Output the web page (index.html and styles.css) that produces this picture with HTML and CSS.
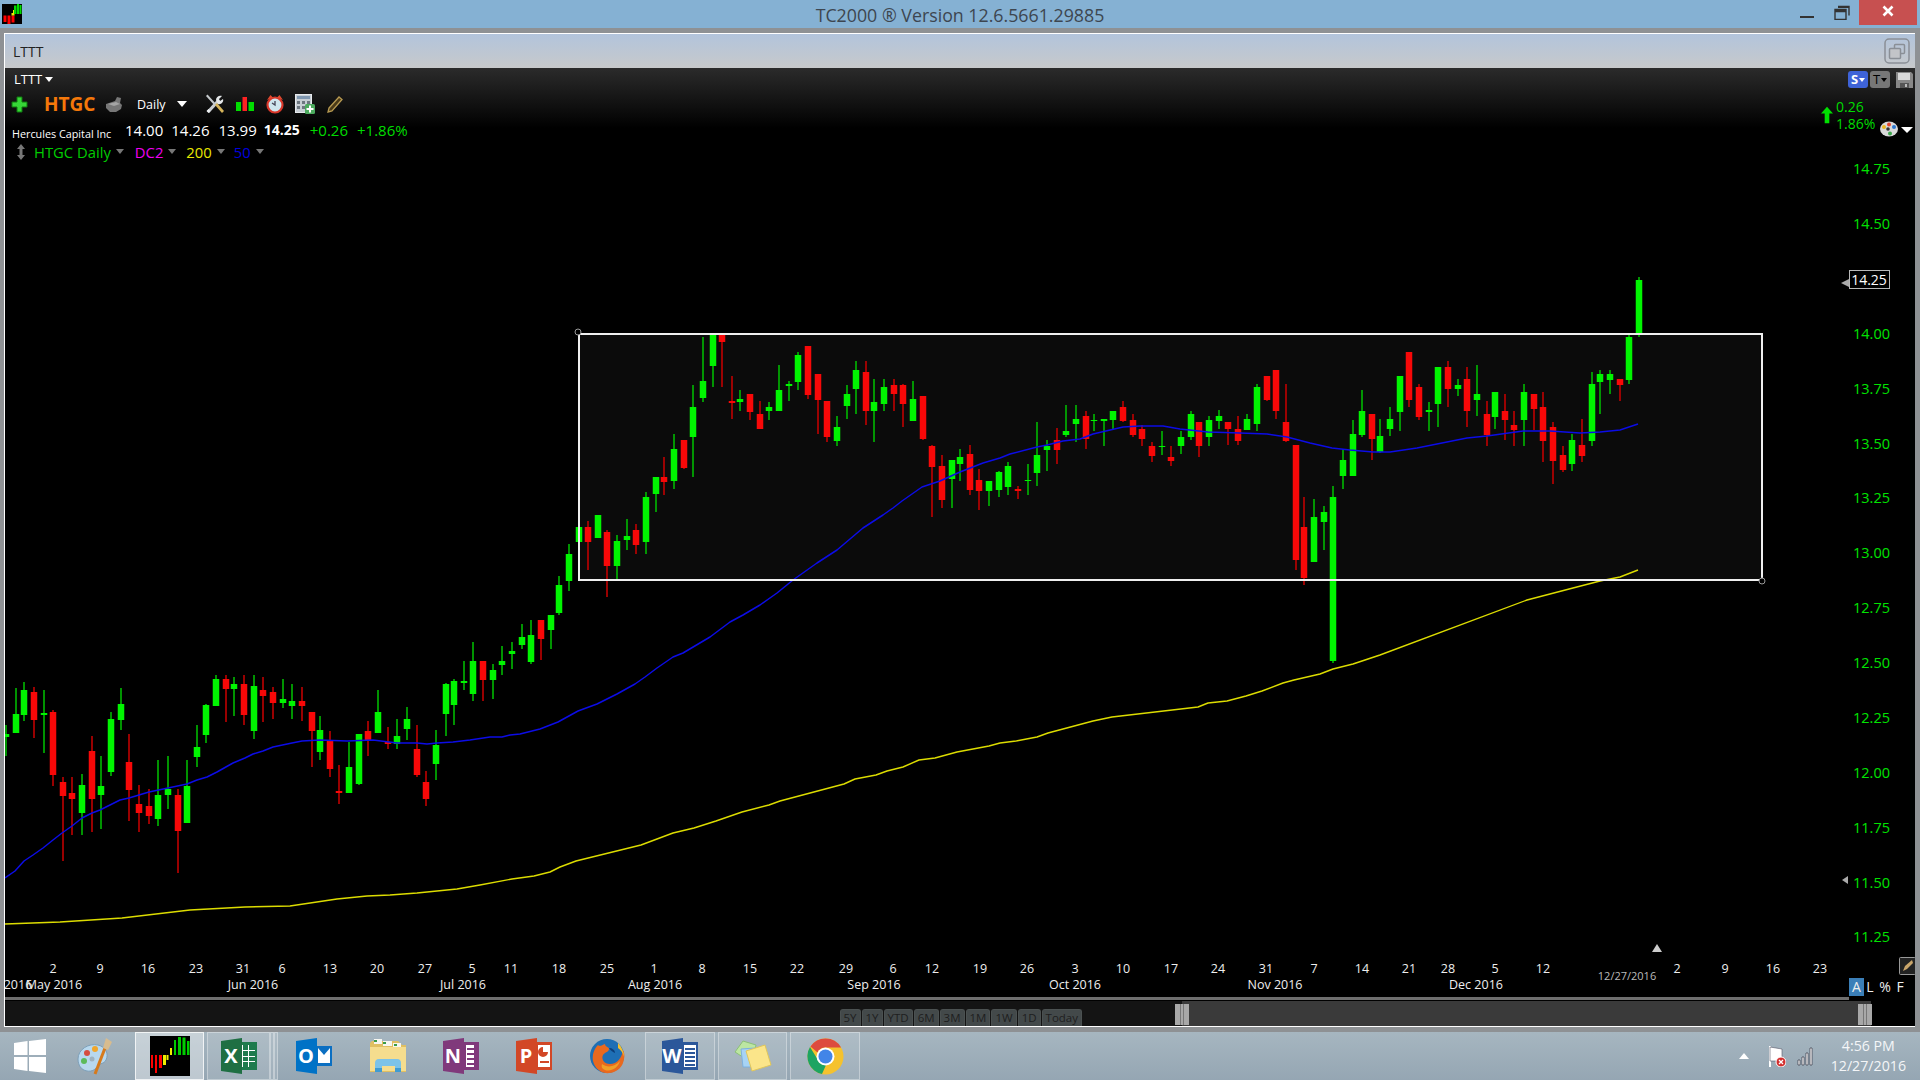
FILE: index.html
```html
<!DOCTYPE html>
<html lang="en">
<head>
<meta charset="utf-8">
<title>TC2000 Version 12.6.5661.29885</title>
<link rel="stylesheet" href="styles.css">
</head>
<body>
<div class="app">
  <header class="titlebar">
    <div class="title-left">
      <svg class="app-logo" width="20" height="20" viewBox="0 0 40 40"><rect width="40" height="40"/><path d="M3 23h6v13H3zM11 23h6v18h-6zM19 23h6v14h-6z" fill="#f00"/><path d="M19 18h6v5h-6zM22 12h4v6h-4z" fill="#ee0"/><path d="M24 3h5v17h-5z" fill="#0d0"/><path d="M30 0h4v20h-4zM35 2h4v18h-4z" fill="#0d0"/></svg>
    </div>
    <div class="title-text">TC2000 ® Version 12.6.5661.29885</div>
    <div class="title-controls">
      <span class="win-min"></span>
      <svg class="win-max" width="16" height="15" viewBox="0 0 16 15"><path d="M4 1.5h11v9M1 4.5h11v10H1zM1 6.5h11" fill="none" stroke="#333" stroke-width="1.4"/><path d="M4 1h11v2H4zM1 4h11v2H1z" fill="#333"/></svg>
      <span class="win-close">
        <svg width="12" height="12" viewBox="0 0 12 12"><path d="M1.5 1.5l9 9M10.500 1.500l-9 9" stroke="#fff" stroke-width="2.600"/></svg>
      </span>
    </div>
  </header>

  <div class="window">
    <div class="panel-head">
      <span class="panel-name">LTTT</span>
      <svg width="26" height="26" viewBox="0 0 26 26"><rect x="1" y="1" width="24" height="24" rx="4" fill="none" stroke="#8a8f96" stroke-width="1.500"/><rect x="10.500" y="6.500" width="10" height="9" rx="1" fill="none" stroke="#8a8f96" stroke-width="1.500"/><rect x="5.500" y="10.500" width="11" height="10" rx="1" fill="#c2c4c8" stroke="#8a8f96" stroke-width="1.500"/></svg>
    </div>

    <main class="chart">
      <svg class="plot" width="1910" height="959" viewBox="5 68 1910 959">
        <rect class="draw-fill" x="579" y="334" width="1183" height="246"/>

        <path class="wick-g" d="M6 725V756M16 688V733M24 682V721M44 690V753M82 774V835M101 756V829M111 712V776M121 688V730M158 760V826M168 756V809M187 760V823M197 725V767M206 704V743M216 675V706M234 677V716M254 675V739M283 679V708M292 684V719M320 716V760M349 742V793M359 734V785M378 690V733M397 719V749M407 707V740M436 730V780M446 683V736M454 679V725M464 661V690M473 642V701M493 664V699M502 646V675M512 642V669M522 624V649M531 620V664M551 615V649M559 576V615M569 544V591M579 523V570M598 515V538M617 535V580M627 519V550M646 492V554M656 477V512M674 434V489M693 385V477M703 337V402M713 335V387M740 390V411M769 402V420M779 365V411M789 381V401M798 352V390M837 416V446M847 385V419M856 361V414M874 379V442M884 379V411M913 381V421M952 460V508M960 449V481M989 481V506M999 471V497M1008 462V495M1028 464V495M1037 422V486M1047 440V471M1066 405V437M1076 405V442M1094 414V431M1104 419V446M1113 411V429M1162 431V455M1181 431V454M1191 411V440M1209 416V446M1219 410V429M1247 414V430M1257 384V431M1314 499V562M1324 506V550M1333 486V663M1343 449V489M1353 420V476M1362 390V437M1380 419V453M1390 407V436M1400 376V431M1429 402V431M1438 367V427M1458 379V396M1477 365V416M1495 392V429M1524 384V446M1572 434V471M1592 372V446M1600 370V414M1610 370V394M1629 335V384M1639 277V337"/>
        <path class="body-g" d="M6 734V737M16 714V733M24 690V715M44 713V715M82 785V813M101 786V795M111 719V772M121 704V720M158 795V819M168 789V795M187 786V823M197 747V757M206 705V735M216 679V706M234 684V689M254 686V731M283 699V703M292 701V706M320 730V752M349 767V793M359 734V784M378 712V733M397 736V744M407 719V729M436 745V764M446 684V714M454 681V705M464 681V683M473 661V694M493 670V680M502 661V665M512 651V654M522 637V645M531 635V662M551 615V630M559 585V613M569 554V581M579 527V542M598 515V538M617 541V566M627 536V540M646 497V542M656 477V494M674 449V481M693 407V437M703 381V398M713 335V366M740 399V402M769 407V411M779 390V411M789 384V386M798 355V382M837 427V441M847 394V406M856 370V389M874 402V411M884 387V404M913 399V421M952 460V479M960 457V464M989 481V491M999 472V490M1008 466V487M1028 480V481M1037 455V473M1047 446V450M1066 431V435M1076 419V424M1094 420V421M1104 419V421M1113 411V420M1162 446V447M1181 437V446M1191 414V437M1209 420V437M1219 416V421M1247 419V430M1257 387V424M1314 517V562M1324 512V522M1333 497V661M1343 460V476M1353 434V476M1362 411V435M1380 436V452M1390 419V429M1400 376V412M1429 410V412M1438 367V404M1458 385V389M1477 394V400M1495 392V417M1524 392V420M1572 440V464M1592 384V441M1600 374V382M1610 374V380M1629 337V380M1639 280V335"/>
        <path class="wick-r" d="M34 687V738M53 710V786M63 777V861M72 777V835M92 736V832M129 734V821M139 785V832M149 789V824M178 789V873M226 675V722M244 675V725M263 677V722M273 687V719M302 687V721M312 712V767M330 731V777M339 765V804M368 721V756M388 727V749M417 725V777M426 771V806M483 661V701M541 620V660M588 521V570M607 530V597M636 524V554M664 457V495M684 440V469M722 335V387M732 376V419M750 394V420M760 401V429M808 346V399M818 374V434M827 401V442M866 361V425M894 379V411M903 384V427M923 396V440M932 445V517M942 455V508M970 445V495M979 469V510M1018 486V499M1057 428V464M1086 411V449M1123 401V422M1133 414V437M1142 425V446M1152 442V462M1171 446V466M1199 422V457M1228 422V445M1238 416V445M1267 376V401M1276 370V419M1286 384V442M1296 445V570M1304 497V585M1372 414V460M1409 352V407M1419 384V420M1448 361V407M1467 367V427M1487 401V446M1505 394V440M1514 411V446M1534 394V430M1543 392V462M1553 422V484M1563 446V472M1582 419V462M1620 379V401"/>
        <path class="body-r" d="M34 692V720M53 712V775M63 782V796M72 793V799M92 751V799M129 762V790M139 804V813M149 806V816M178 795V831M226 679V689M244 684V715M263 690V696M273 692V703M302 701V706M312 712V731M330 740V769M339 791V793M368 731V740M388 742V744M417 749V775M426 782V799M483 661V680M541 620V639M588 527V542M607 532V566M636 530V545M664 477V482M684 440V468M722 335V342M732 401V403M750 394V412M760 414V429M808 346V395M818 374V400M827 401V437M866 372V411M894 385V394M903 385V404M923 396V439M932 446V467M942 466V500M970 454V490M979 480V491M1018 489V491M1057 440V450M1086 416V439M1123 407V421M1133 420V435M1142 429V439M1152 446V456M1171 457V461M1199 422V446M1228 422V429M1238 429V441M1267 376V400M1276 370V411M1286 422V441M1296 445V560M1304 527V578M1372 414V439M1409 352V400M1419 387V417M1448 367V389M1467 379V411M1487 414V435M1505 411V420M1514 425V430M1534 394V409M1543 407V441M1553 427V461M1563 455V470M1582 445V456M1620 379V385"/>

        <polyline class="ma-blue" points="5,878 15,871 24,861 33,855 43,848 53,840 62,833 72,826 82,818 92,813 100,810 110,805 120,800 129,798 139,795 149,792 168,788 187,784 197,780 207,777 217,772 233,763 245,758 253,754 263,751 273,747 292,743 302,741 320,740 347,741 373,740 397,743 417,743 427,744 437,743 453,742 470,740 490,737 502,737 510,735 520,734 540,729 558,722 578,711 597,704 617,694 635,684 645,677 657,668 673,657 683,653 710,637 730,622 743,615 760,605 777,593 793,580 817,563 837,550 863,528 883,515 893,508 902,501 922,487 940,481 960,472 983,463 1000,458 1010,454 1037,447 1047,445 1063,441 1080,439 1093,434 1123,427 1140,426 1163,426 1180,429 1208,432 1240,433 1267,434 1287,437 1310,443 1332,448 1350,450 1373,452 1390,452 1417,448 1447,442 1467,438 1487,436 1523,431 1550,431 1580,433 1600,432 1620,430 1638,424"/>
        <polyline class="ma-yellow" points="5,924 60,922 122,918 190,910 245,907 290,906 337,899 367,896 390,895 417,893 457,889 480,885 512,879 534,876 550,872 560,867 576,861 641,845 673,833 694,828 716,821 742,812 769,805 780,801 844,784 855,779 876,775 887,771 903,767 919,760 935,758 957,752 989,746 1000,743 1016,741 1037,737 1048,733 1093,721 1112,717 1198,707 1208,703 1227,701 1246,696 1262,691 1283,683 1294,680 1320,674 1333,669 1353,664 1380,655 1527,600 1573,588 1600,581 1620,577 1638,570"/>

        <rect class="draw-box" x="579" y="334" width="1183" height="246"/>
        <circle class="draw-handle" cx="578" cy="332" r="3"/>
        <circle class="draw-handle" cx="1762" cy="581" r="3"/>

        <g class="price-axis">
          <text x="1853" y="174">14.75</text><text x="1853" y="229">14.50</text><text x="1853" y="339">14.00</text><text x="1853" y="394">13.75</text><text x="1853" y="449">13.50</text><text x="1853" y="503">13.25</text><text x="1853" y="558">13.00</text><text x="1853" y="613">12.75</text><text x="1853" y="668">12.50</text><text x="1853" y="723">12.25</text><text x="1853" y="778">12.00</text><text x="1853" y="833">11.75</text><text x="1853" y="888">11.50</text><text x="1853" y="942">11.25</text>
        </g>
        <rect class="last-box" x="1849.500" y="270.500" width="40" height="18"/>
        <text class="last-text" x="1869" y="285">14.25</text>
        <path class="marker" d="M1849 279v8l-8-4z"/>
        <path class="marker" d="M1842 880l6-4v8z"/>

        <g class="day-axis">
          <text x="53" y="973">2</text><text x="100" y="973">9</text><text x="148" y="973">16</text><text x="196" y="973">23</text><text x="243" y="973">31</text><text x="282" y="973">6</text><text x="330" y="973">13</text><text x="377" y="973">20</text><text x="425" y="973">27</text><text x="472" y="973">5</text><text x="511" y="973">11</text><text x="559" y="973">18</text><text x="607" y="973">25</text><text x="654" y="973">1</text><text x="702" y="973">8</text><text x="750" y="973">15</text><text x="797" y="973">22</text><text x="846" y="973">29</text><text x="893" y="973">6</text><text x="932" y="973">12</text><text x="980" y="973">19</text><text x="1027" y="973">26</text><text x="1075" y="973">3</text><text x="1123" y="973">10</text><text x="1171" y="973">17</text><text x="1218" y="973">24</text><text x="1266" y="973">31</text><text x="1314" y="973">7</text><text x="1362" y="973">14</text><text x="1409" y="973">21</text><text x="1448" y="973">28</text><text x="1495" y="973">5</text><text x="1543" y="973">12</text><text x="1677" y="973">2</text><text x="1725" y="973">9</text><text x="1773" y="973">16</text><text x="1820" y="973">23</text>
        </g>
        <g class="month-axis">
          <text x="18" y="989">2016</text><text x="54" y="989">May 2016</text><text x="253" y="989">Jun 2016</text><text x="463" y="989">Jul 2016</text><text x="655" y="989">Aug 2016</text><text x="874" y="989">Sep 2016</text><text x="1075" y="989">Oct 2016</text><text x="1275" y="989">Nov 2016</text><text x="1476" y="989">Dec 2016</text>
        </g>
        <text class="date-tag" x="1627" y="980">12/27/2016</text>
        <path class="marker-white" d="M1657 944l5 8h-10z"/>

        <rect class="scale-on" x="1849" y="978" width="15" height="18"/>
        <g class="scale-keys">
          <text x="1856.500" y="992">A</text><text x="1870" y="992">L</text><text x="1885" y="992">%</text><text x="1900" y="992">F</text>
        </g>
        <g class="scale-pencil">
          <rect x="1899.500" y="957.500" width="16" height="17" rx="1"/>
          <path d="M1903 971l2-5 7-6 1 3-6 6z"/>
        </g>
      </svg>

      <div class="toolbar">
        <div class="row row-list"><span>LTTT</span><i class="tri tri-white"></i></div>
        <div class="row row-tools">
          <svg class="t-plus" width="17" height="17" viewBox="0 0 17 17"><path d="M6 1h5v5h5v5h-5v5H6v-5H1V6h5z" fill="#37d637" stroke="#0e7a0e" stroke-width="1"/></svg>
          <span class="symbol">HTGC</span>
          <svg class="t-blob" width="18" height="16" viewBox="0 0 18 16"><path d="M1 8l9-3 2-4 4 1-1 5 2 2-1 4-5 3H5L1 12z" fill="#777"/><path d="M3 8l8-2 4 2-6 2z" fill="#a5a5a5"/></svg>
          <span class="t-daily">Daily</span>
          <i class="tri tri-white t-dtri"></i>
          <svg class="t-wrench" width="20" height="20" viewBox="0 0 20 20"><path d="M3 18L14 6" stroke="#c9cdd0" stroke-width="3.200"/><path d="M1.500 17l2 2 2-2-2-2z" fill="#eef0f2"/><path d="M11 6c0-3 3-5 6-4l-3 3 1 2 3-2c1 3-2 6-5 5z" fill="#e4e7e9"/><path d="M1 2l1.500-1.500 9 10-1.500 1.500z" fill="#c5c9cc"/><path d="M10 11l2-2 7 8-2 2z" fill="#d6b45a"/></svg>
          <svg class="t-bars" width="18" height="14" viewBox="0 0 18 14"><path d="M0 5h5v9H0zM12.500 5H18v9h-5.500z" fill="#0d0"/><path d="M6.500 0H11v14H6.500z" fill="#f22"/></svg>
          <svg class="t-alarm" width="20" height="20" viewBox="0 0 20 20"><circle cx="10" cy="11" r="7.500" fill="#cfe6ee" stroke="#d8372a" stroke-width="2.200"/><path d="M2 6l3.500-5 2.500 2.500zM18 6l-3.500-5-2.500 2.500z" fill="#e0492f"/><path d="M10 7v4l-3-2" fill="none" stroke="#445" stroke-width="1.300"/></svg>
          <svg class="t-calc" width="20" height="20" viewBox="0 0 20 20"><rect x="0.500" y="0.500" width="16" height="18" fill="#c7ced4" stroke="#e6eaee"/><path d="M2 2h13v3H2z" fill="#7f97b0"/><path d="M2 7h3v3H2zM7 7h3v3H7zM12 7h3v3h-3zM2 12h3v3H2zM7 12h3v3H7z" fill="#6d7780"/><rect x="10" y="10" width="10" height="10" rx="1.500" fill="#4caa5e"/><path d="M15 11.500v7M11.500 15h7" stroke="#fff" stroke-width="2"/></svg>
          <svg class="t-pencil" width="18" height="18" viewBox="0 0 18 18"><path d="M3 13L13 2l3 2.500L6 16l-4 1z" fill="#4a3a18" stroke="#b79a52" stroke-width="1.300"/></svg>
        </div>
        <div class="row row-quote">
          <span class="co-name">Hercules Capital Inc</span>
          <span class="q-open">14.00</span><span class="q-high">14.26</span><span class="q-low">13.99</span><b class="q-last">14.25</b>
          <span class="q-chg">+0.26</span><span class="q-pct">+1.86%</span>
        </div>
        <div class="row row-legend">
          <svg class="l-move" width="10" height="16" viewBox="0 0 10 16"><path d="M5 0l4 5H6.500v6H9l-4 5-4-5h2.500V5H1z" fill="#777"/></svg>
          <span class="l-green">HTGC Daily</span><i class="tri tri-gray"></i>
          <span class="l-mag">DC2</span><i class="tri tri-gray"></i>
          <span class="l-yel">200</span><i class="tri tri-gray"></i>
          <span class="l-blue">50</span><i class="tri tri-gray"></i>
        </div>
      </div>

      <div class="chart-tools">
        <span class="tool-btn tool-s">S<i class="tri tri-small-w"></i></span>
        <span class="tool-btn tool-t">T<i class="tri tri-small-k"></i></span>
        <svg class="tool-save" width="17" height="17" viewBox="0 0 17 17"><path d="M0 1h15l2 2v14H0z" fill="#888"/><path d="M2 2h12v7H2z" fill="#d8d8d8"/><path d="M4 12h9v5H4z" fill="#555"/><path d="M9 13h2v3H9z" fill="#bbb"/></svg>
      </div>

      <div class="chart-change">
        <svg class="chg-arrow" width="12" height="18" viewBox="0 0 13 18"><path d="M6.500 0L13 7.500H9V18H4V7.500H0z" fill="#00e000"/></svg>
        <div class="chg-text"><span>0.26</span><span>1.86%</span></div>
        <svg class="chg-palette" width="18" height="16" viewBox="0 0 18 16"><ellipse cx="9" cy="8" rx="9" ry="7.500" fill="#d9d9d9"/><circle cx="4" cy="6" r="2" fill="#e8b620"/><circle cx="9" cy="3.500" r="2" fill="#e2452f"/><circle cx="14" cy="6" r="2" fill="#2f78d0"/><circle cx="10" cy="12.500" r="2" fill="#3aa64a"/><circle cx="8" cy="8" r="1.800" fill="#333"/></svg>
        <i class="tri tri-big"></i>
      </div>

      <div class="range">
        <div class="range-line"></div>
        <div class="range-strip">
          <div class="range-left">
            <span class="rbtn">5Y</span><span class="rbtn">1Y</span><span class="rbtn">YTD</span><span class="rbtn">6M</span><span class="rbtn">3M</span><span class="rbtn">1M</span><span class="rbtn">1W</span><span class="rbtn">1D</span><span class="rbtn">Today</span>
          </div>
          <div class="range-sel">
            <span class="grip grip-a"></span>
            <span class="grip grip-b"></span>
          </div>
        </div>
      </div>
    </main>
  </div>

  <footer class="taskbar">
    <div class="ti ti-start">
      <svg width="32" height="34" viewBox="0 0 32 34"><path d="M0 4l13.500-2v14H0zM15 2l17-2v16H15zM0 18h13.500v14L0 30zM15 18h17v16l-17-2z" fill="#fff"/></svg>
    </div>
    <div class="ti ti-paint">
      <svg width="36" height="38" viewBox="0 0 36 38"><path d="M1 22C1 12 12 6 21 8c8 2 11 9 8 15-2 4-6 3-8 6s-6 6-11 5C4 33 1 28 1 22z" fill="#b8d8ee" stroke="#7d9fb8"/><circle cx="10" cy="16" r="3" fill="#d64d3f"/><circle cx="18" cy="12" r="3" fill="#f0a62c"/><circle cx="7" cy="24" r="3" fill="#5dba5a"/><circle cx="15" cy="22" r="2.500" fill="#9fb2bf"/><path d="M18 37L28 11" stroke="#d67a1c" stroke-width="3"/><path d="M26 11l3-10 6 4-4 8z" fill="#d8bc8e"/></svg>
    </div>
    <div class="ti ti-btn ti-active">
      <svg width="40" height="40" viewBox="0 0 40 40"><rect width="40" height="40"/><path d="M1 19h2v13H1zM5 19h2v18H5zM9 19h3v13H9z" fill="#f00"/><path d="M13 19h3v10h-3zM16.500 19h2v5h-2zM20 12h2v7h-2z" fill="#ee0"/><path d="M24 4h2v15h-2zM28 1h3v18h-3zM32.500 1.500h3V19h-3zM37 5h2.500v14H37z" fill="#0c0"/></svg>
    </div>
    <div class="ti ti-btn ti-excel">
      <svg width="36" height="36" viewBox="0 0 36 36"><path d="M21 4h15v28H21z" fill="#1f7b4d"/><path d="M21 7h13v22H21z" fill="#fff"/><path d="M22 7h5v5h-5zM28 7h6v5h-6zM22 13h5v5h-5zM28 13h6v5h-6zM22 19h5v4h-5zM28 19h6v4h-6zM22 24h5v5h-5zM28 24h6v5h-6z" fill="#1f7b4d"/><path d="M0 3l21-3v36L0 33z" fill="#1f6f43"/><text class="ic-letter" x="10" y="25">X</text></svg>
    </div>
    <div class="ti-stack"></div><div class="ti-stack"></div>
    <div class="ti ti-outlook">
      <svg width="36" height="36" viewBox="0 0 36 36"><path d="M20 8h16v20H20z" fill="#0b6fc2"/><path d="M22 10h12v15H22z" fill="#fff"/><path d="M22 10l6 7 6-7v-1H22z" fill="#0b6fc2"/><path d="M0 3l21-3v36L0 33z" fill="#0072c6"/><text class="ic-letter" x="10" y="25">O</text></svg>
    </div>
    <div class="ti ti-folder">
      <svg width="38" height="36" viewBox="0 0 38 36"><path d="M3 3h26l4 4h4v27H1V5z" fill="#e0bf62"/><path d="M5 1h8v5H5zM14 3h9v5h-9zM24 5h8v5h-8z" fill="#f6f6f0"/><path d="M5 2h3v2H5zM14 4h3v2h-3zM25 6h3v2h-3z" fill="#3a9c45"/><path d="M1 9h36v24H1z" fill="#f5dd8e"/><path d="M10 21h18c3 0 4 2 4 4v9H26v-6H13v6H6v-9c0-2 1-4 4-4z" fill="#7cc3e8"/><path d="M6 30h7v4H6zM26 30h6v4h-6z" fill="#3f9bd2"/></svg>
    </div>
    <div class="ti ti-onenote">
      <svg width="36" height="36" viewBox="0 0 36 36"><path d="M20 4h16v28H20z" fill="#80397b"/><path d="M23 7h8v22h-8z" fill="#fff"/><path d="M24 10h7v2h-7zM24 15h7v2h-7zM24 20h7v2h-7zM24 25h7v2h-7z" fill="#80397b"/><path d="M0 3l21-3v36L0 33z" fill="#80397b"/><text class="ic-letter" x="10" y="25">N</text></svg>
    </div>
    <div class="ti ti-ppt">
      <svg width="36" height="36" viewBox="0 0 36 36"><path d="M20 4h16v28H20z" fill="#d24726"/><path d="M22 7h12v22H22z" fill="#fff"/><path d="M27 9a5 5 0 1 0 5 5h-5z" fill="#d24726"/><path d="M24 23h9v2h-9z" fill="#d24726"/><path d="M0 3l21-3v36L0 33z" fill="#d24726"/><text class="ic-letter" x="10" y="25">P</text></svg>
    </div>
    <div class="ti ti-fox">
      <svg width="38" height="38" viewBox="0 0 38 38"><circle cx="19" cy="19" r="17" fill="#1e6fb5"/><path d="M10 8c-4 4-6 10-5 16 2 9 10 13 17 12 7-1 13-6 14-14 1-4 0-7-1-9-1 8-6 14-13 14-6 0-9-5-7-9 2-3 6-3 6-6 0-2-4-2-4-5-3 1-5 3-7 1z" fill="#e8691f"/><path d="M30 6c4 4 6 9 6 14-1-4-3-7-6-9z" fill="#f5c02e"/><path d="M14 27c5 4 13 3 18-3-2 7-9 11-15 9-3-1-4-3-3-6z" fill="#f0a028"/><path d="M21 11c3 0 6 2 6 5-2-1-4-2-6-5z" fill="#0d3f7a"/></svg>
    </div>
    <div class="ti ti-btn ti-word">
      <svg width="36" height="36" viewBox="0 0 36 36"><path d="M20 4h16v28H20z" fill="#2b579a"/><path d="M22 7h12v22H22z" fill="#fff"/><path d="M23 10h10v2H23zM23 14h10v2H23zM23 18h10v2H23zM23 22h10v2H23zM23 26h10v2H23z" fill="#2b579a"/><path d="M0 3l21-3v36L0 33z" fill="#2b579a"/><text class="ic-letter" x="10" y="25">W</text></svg>
    </div>
    <div class="ti ti-btn ti-sticky">
      <svg width="38" height="32" viewBox="0 0 38 32"><path d="M1 12L9 1l13 4-4 18z" fill="#bce6a2" stroke="#8cc078"/><path d="M7 9l14-1v19H9z" fill="#a7d3f5" stroke="#7fb0dc"/><path d="M12 11l19-6 6 20-19 6z" fill="#fbe58a" stroke="#e0c65a"/></svg>
    </div>
    <div class="ti ti-btn ti-chrome">
      <svg width="37" height="37" viewBox="0 0 37 37"><circle cx="18.500" cy="18.500" r="18" fill="#f5c22e"/><path d="M18.500 0.500a18 18 0 0 1 15.600 9H18.500a9 9 0 0 0-8 5L3.500 8.500A18 18 0 0 1 18.500 0.500z" fill="#dd4b3e"/><path d="M3 9a18 18 0 0 0 12 27l4-9c-3 0-6-1-8-5z" fill="#1da462"/><circle cx="18.500" cy="18.500" r="9" fill="#fff"/><circle cx="18.500" cy="18.500" r="7" fill="#4285e8"/></svg>
    </div>
    <div class="tray">
      <i class="tray-arrow"></i>
      <svg class="tray-flag" width="18" height="21" viewBox="0 0 18 21"><path d="M2 0v21" stroke="#fff" stroke-width="2"/><path d="M2 1l12 2v12H2z" fill="#fff" stroke="#556" stroke-width="0.600"/><circle cx="13" cy="16" r="5" fill="#d32f2f" stroke="#fff"/><path d="M11 14l4 4M15 14l-4 4" stroke="#fff" stroke-width="1.300"/></svg>
      <svg class="tray-signal" width="16" height="20" viewBox="0 0 16 20"><path d="M1 14h2v5H1zM5 11h2v8H5zM9 7h2v12H9zM13 2h2v17h-2z" fill="#fff" stroke="#334" stroke-width="0.700"/></svg>
      <div class="clock"><span>4:56 PM</span><span>12/27/2016</span></div>
    </div>
  </footer>
</div>
</body>
</html>
```
FILE: styles.css
```css
* { box-sizing: border-box; }
html, body { margin: 0; padding: 0; background: #000; }
body { font-family: "Open Sans", "Noto Sans", sans-serif; }
.app { width: 1920px; height: 1080px; display: flex; flex-direction: column; overflow: hidden; }

/* title bar */
.titlebar { height: 28px; background: #85b1d3; display: grid; grid-template-columns: 1fr auto 1fr; align-items: start; }
.title-left { padding: 4px 0 0 2px; }
.app-logo { display: block; }
.title-text { font-size: 17.800px; line-height: 30px; color: #3d4650; }
.title-controls { display: flex; justify-content: flex-end; align-items: flex-start; padding-right: 3px; }
.win-min { width: 14px; height: 2px; background: #333; margin-top: 16px; }
.win-max { margin: 5px 0 0 20px; }
.win-close { width: 58px; height: 25px; margin-left: 9px; background: #c75050; display: flex; align-items: center; justify-content: center; padding-bottom: 3px; }

/* window */
.window { height: 1004px; background: #8e9194; padding: 5px 5px 5px 4px; display: flex; flex-direction: column; }
.panel-head { height: 35px; flex: none; border-top: 1px solid #fff; border-left: 1px solid #fff; background: linear-gradient(#b2c4dc, #c7c9cb); display: flex; align-items: center; justify-content: space-between; padding: 0 5px 0 8px; }
.panel-name { font-size: 14px; color: #222; }

/* chart */
.chart { position: relative; flex: 1; border-left: 1px solid #fff; border-bottom: 1px solid #fff; background: linear-gradient(#2b2b2b, #000 60px); display: flex; flex-direction: column; color: #fff; font-size: 15px; }
.plot { position: absolute; left: 0; top: 0; display: block; font-family: "Open Sans", "Noto Sans", sans-serif; }
.draw-fill { fill: #0b0b0b; }
.wick-g, .wick-r, .body-g, .body-r { fill: none; }
.wick-g { stroke: #00c400; stroke-width: 1.500; }
.wick-r { stroke: #cc0000; stroke-width: 1.500; }
.body-g { stroke: #00f500; stroke-width: 6.500; }
.body-r { stroke: #f80808; stroke-width: 6.500; }
.ma-blue, .ma-yellow { fill: none; stroke-linejoin: round; }
.ma-blue { stroke: #0c0ce6; stroke-width: 1.500; }
.ma-yellow { stroke: #dcdc00; stroke-width: 1.400; }
.draw-box { fill: none; stroke: #efefef; stroke-width: 2; }
.draw-handle { fill: #000; stroke: #999; stroke-width: 1; }
.price-axis text { fill: #00e400; font-size: 14.500px; }
.last-box { fill: #000; stroke: #b8b8b8; }
.last-text { fill: #fff; font-size: 14px; text-anchor: middle; }
.marker { fill: #aaa; }
.marker-white { fill: #ccc; }
.day-axis text { fill: #eee; font-size: 12.500px; text-anchor: middle; }
.month-axis text { fill: #eee; font-size: 12.500px; text-anchor: middle; }
.date-tag { fill: #bbb; font-size: 11px; text-anchor: middle; }
.scale-on { fill: #3b7fb8; }
.scale-keys text { fill: #eee; font-size: 14px; text-anchor: middle; }
.scale-pencil rect { fill: #222; stroke: #999; }
.scale-pencil path { fill: #c9a56a; }
.ic-letter { fill: #fff; font-family: "Open Sans", sans-serif; font-size: 20px; font-weight: 700; text-anchor: middle; }

/* toolbar */
.toolbar { position: relative; display: flex; flex-direction: column; }
.row { display: flex; align-items: center; }
.row-list { height: 16px; margin-top: 3px; padding-left: 9px; font-size: 13px; }
.row-tools { height: 20px; margin-top: 7px; padding-left: 6px; font-size: 12.500px; }
.row-quote { height: 19px; margin-top: 7px; padding-left: 7px; align-items: flex-end; }
.row-legend { height: 17px; margin-top: 3px; padding-left: 11px; font-size: 14.800px; }
.tri { display: inline-block; flex: none; width: 0; height: 0; border-style: solid; border-color: transparent; border-bottom-width: 0; }
.tri-white { border-width: 5px 4.500px 0; border-top-color: #fff; margin-left: 3px; }
.tri-gray { border-width: 5px 4.500px 0; border-top-color: #777; margin-left: 5px; }
.tri-big { border-width: 6px 6px 0; border-top-color: #fff; margin: 0 0 -1px 3px; }
.tri-small-w { border-width: 4px 3.500px 0; border-top-color: #fff; margin-left: 1px; }
.tri-small-k { border-width: 4px 3.500px 0; border-top-color: #000; margin-left: 1px; }
.symbol { font-size: 19px; font-weight: 700; color: #f5780a; margin-left: 16px; width: 50px; line-height: 20px; }
.t-blob { margin-left: 11px; }
.t-daily { margin-left: 14px; width: 28px; }
.t-dtri { margin-left: 12px; border-width: 6px 5px 0; }
.t-wrench { margin-left: 18px; }
.t-bars { margin-left: 11px; }
.t-alarm { margin-left: 11px; }
.t-calc { margin-left: 10px; }
.t-pencil { margin-left: 11px; }
.row-quote span, .row-quote b { line-height: 20px; }
.row-quote .co-name { font-size: 10.800px; width: 100px; flex: none; white-space: nowrap; line-height: 16px; margin-bottom: -2px; }
.q-open { margin-left: 13px; }
.q-high { margin-left: 8px; }
.q-low { margin-left: 9px; }
.q-last { margin-left: 7px; font-size: 14px; }
.q-chg { margin-left: 10px; color: #00dc00; }
.q-pct { margin-left: 9px; color: #00dc00; }
.l-move { margin-right: 8px; }
.l-green { color: #00cc00; }
.l-mag { color: #f000f0; margin-left: 11px; }
.l-yel { color: #e8e800; margin-left: 10px; }
.l-blue { color: #0000e0; margin-left: 9px; }

/* top right */
.chart-tools { position: absolute; top: 3px; right: 2px; display: flex; align-items: flex-start; gap: 2px; }
.tool-btn { width: 20px; height: 17px; border-radius: 3px; display: flex; align-items: center; justify-content: center; font-size: 13px; font-weight: 700; line-height: 17px; }
.tool-s { background: #3e63d8; color: #fff; }
.tool-t { background: #777; color: #000; font-weight: 400; }
.tool-save { margin-left: 4px; }
.chart-change { position: absolute; top: 30px; right: 2px; display: flex; align-items: flex-end; color: #00dc00; font-size: 14px; }
.chg-arrow { margin: 0 3px 8px 0; }
.chg-text { display: flex; flex-direction: column; width: 42px; line-height: 17px; }
.chg-palette { margin-bottom: -5px; margin-left: 2px; }

/* range strip */
.range { position: relative; margin-top: auto; }
.range-line { height: 3px; width: 1844px; background: #6e6e6e; margin-bottom: 1px; }
.range-strip { height: 25px; display: flex; padding-right: 44px; }
.range-left { width: 1177px; background: #141414; display: flex; align-items: flex-end; justify-content: flex-end; gap: 1px; padding-right: 100px; }
.range-sel { flex: 1; position: relative; background: #3a3a3a; }
.rbtn { height: 17px; padding: 0 3px; min-width: 20px; background: #43494a; border: 1px solid #4b5151; border-bottom: 0; border-radius: 3px 3px 0 0; color: #1e1e1e; font-size: 11.500px; line-height: 16px; text-align: center; }
.grip { position: absolute; top: 3px; width: 14px; height: 21px; background: #a8a8a8 linear-gradient(90deg, transparent 5px, #777 5px, #777 6px, transparent 6px, transparent 8px, #777 8px, #777 9px, transparent 9px); }
.grip-a { left: -7px; }
.grip-b { right: -1px; }

/* task bar */
.taskbar { height: 48px; background: linear-gradient(#a6b6c0, #95a6b3); display: flex; align-items: stretch; }
.ti { display: flex; align-items: center; justify-content: center; flex: none; }
.ti svg { display: block; }
.ti-btn { border: 1px solid rgba(255,255,255,.35); background: rgba(255,255,255,.1); }
.ti-start { width: 60px; }
.ti-paint { width: 70px; }
.ti-active { width: 69px; margin-left: 5px; background: rgba(255,255,255,.38); border-color: rgba(255,255,255,.75); }
.ti-excel { width: 63px; margin-left: 3px; }
.ti-stack { width: 4px; flex: none; border: 1px solid rgba(255,255,255,.35); background: rgba(255,255,255,.1); }
.ti-outlook { width: 72px; }
.ti-folder { width: 75px; }
.ti-onenote { width: 72px; }
.ti-ppt { width: 74px; }
.ti-fox { width: 72px; }
.ti-word { width: 70px; margin-left: 2px; }
.ti-sticky { width: 69px; margin-left: 3px; }
.ti-chrome { width: 70px; margin-left: 3px; }
.tray { margin-left: auto; display: flex; align-items: center; padding-right: 14px; color: #f4f6f8; font-size: 14.200px; }
.tray-arrow { width: 0; height: 0; border-style: solid; border-width: 0 5px 6px; border-color: transparent transparent #fff; margin-right: 19px; }
.tray-flag { margin-right: 11px; }
.tray-signal { margin-right: 18px; }
.clock { display: flex; flex-direction: column; align-items: center; line-height: 20px; }
```
